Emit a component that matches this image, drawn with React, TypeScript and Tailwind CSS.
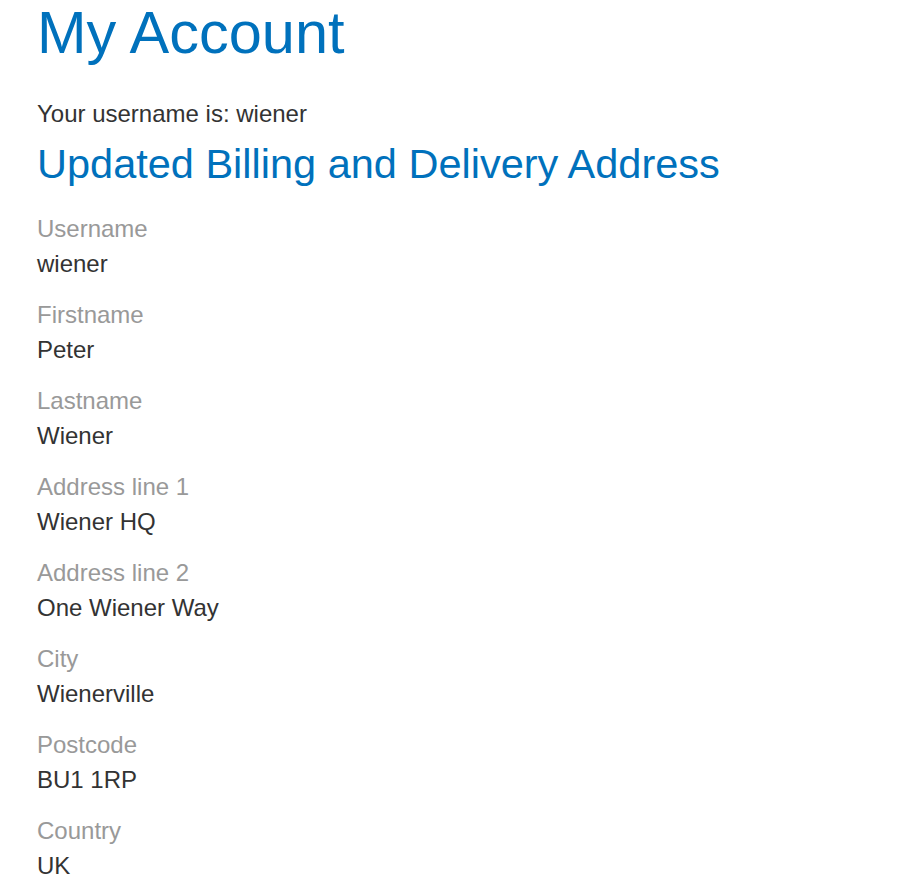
const fields = [
    { label: 'Username', value: 'wiener' },
    { label: 'Firstname', value: 'Peter' },
    { label: 'Lastname', value: 'Wiener' },
    { label: 'Address line 1', value: 'Wiener HQ' },
    { label: 'Address line 2', value: 'One Wiener Way' },
    { label: 'City', value: 'Wienerville' },
    { label: 'Postcode', value: 'BU1 1RP' },
    { label: 'Country', value: 'UK' },
];

const App = () => {
    return (
        <div className="min-h-screen bg-white px-[37px] pt-[1px] font-['Liberation_Sans',Arial,sans-serif] text-[#333333]">
            <h1 className="text-[59.5px] leading-[64px] text-[#0071bc]">My Account</h1>
            <p className="mt-[31px] text-[24px] leading-[35px]">Your username is: wiener</p>
            <h2 className="mt-[9px] text-[41.5px] leading-[48px] text-[#0071bc]">
                Updated Billing and Delivery Address
            </h2>
            <div className="mt-[23px] flex flex-col gap-[16px]">
                {fields.map((f) => (
                    <div key={f.label} className="text-[24px] leading-[35px]">
                        <div className="text-[#999999]">{f.label}</div>
                        <div>{f.value}</div>
                    </div>
                ))}
            </div>
        </div>
    );
};

export default App;
